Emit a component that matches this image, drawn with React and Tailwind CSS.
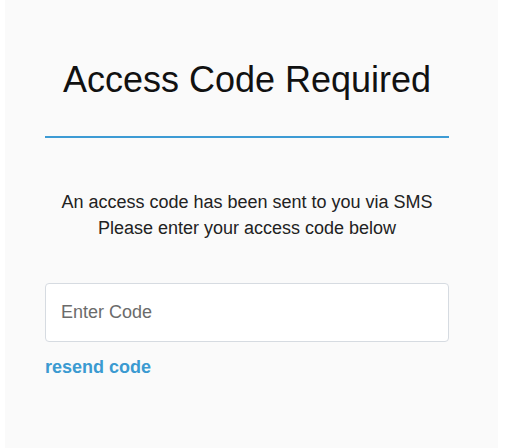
export default function App() {
  return (
    <div className="min-h-[448px] w-full bg-white" style={{ fontFamily: '"Liberation Sans", Arial, sans-serif' }}>
      <div className="ml-[5px] w-[493px] min-h-[448px] bg-[#fafafa] pl-[40px] pt-[60px]">
        <div className="w-[404px] flex flex-col">
          {/* Title */}
          <h1 className="text-[36px] leading-[40px] text-[#111] text-center font-normal">
            Access Code Required
          </h1>
          <div className="mt-[36px] h-[2px] bg-[#3d9bd4]" />

          {/* Message */}
          <p className="mt-[51px] text-[18px] leading-[26px] text-[#222] text-center">
            An access code has been sent to you via SMS
            <br />
            Please enter your access code below
          </p>

          {/* Code input */}
          <input
            type="text"
            placeholder="Enter Code"
            className="mt-[42px] h-[59px] w-full rounded-[4px] border border-[#d6dbe1] bg-white px-[15px] text-[18px] text-[#333] placeholder:text-[#6b6b6b] outline-none"
          />

          <a href="#" className="mt-[12px] text-[18px] leading-[26px] font-bold text-[#3b9ad1] self-start">
            resend code
          </a>
        </div>
      </div>
    </div>
  );
}
